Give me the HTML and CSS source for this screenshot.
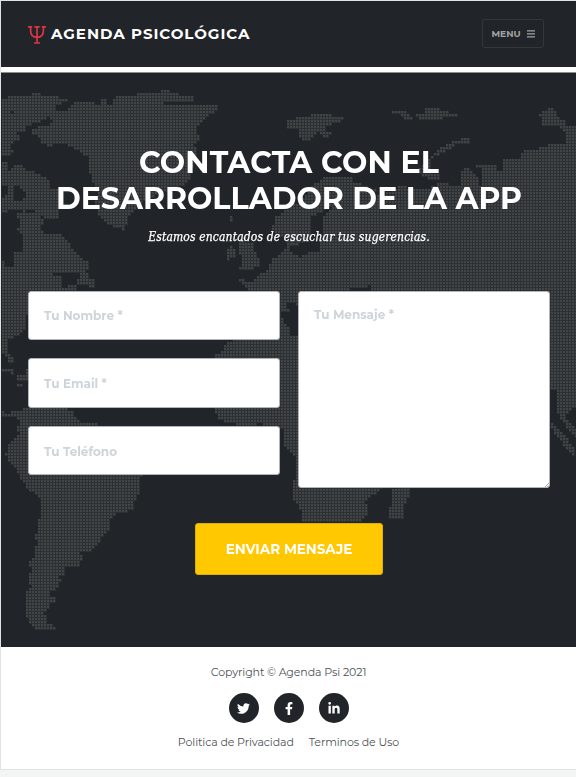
FILE: index.html
```html
<!DOCTYPE html>
<html lang="es">
<head>
<meta charset="utf-8">
<title>Agenda Psicológica</title>
<link rel="stylesheet" href="styles.css">
</head>
<body>
<div class="page">
<header class="nav">
  <a class="brand"><svg class="psi" viewBox="0 0 18 18"><path d="M0 .8h4.200M13.800.8H18M2.600.8v3.800c0 5 2 6.800 6.400 6.800s6.400-1.800 6.400-6.800V.8M9 0v17M6.300.8h5.400M6 17h6"/></svg><span class="brand-name">AGENDA PSICOLÓGICA</span></a>
  <button class="menu"><span>MENU</span><svg width="8" height="8" viewBox="0 0 8 8"><path d="M0 .2h8v1.300H0zM0 3.200h8v1.300H0zM0 6.200h8v1.300H0z"/></svg></button>
</header>
<section class="contact">
  <canvas class="map" id="map" width="575" height="574"></canvas>
  <div class="content">
    <h1><span class="t1">CONTACTA CON EL</span><br><span class="t2">DESARROLLADOR DE LA APP</span></h1>
    <p class="sub">Estamos encantados de escuchar tus sugerencias.</p>
    <form>
      <div class="fields">
        <div class="col">
          <input placeholder="Tu Nombre *"><input placeholder="Tu Email *"><input placeholder="Tu Teléfono">
        </div>
        <div class="message"><textarea placeholder="Tu Mensaje *"></textarea><svg class="grip" width="4" height="4" viewBox="0 0 4 4"><path d="M0 4L4 0M2.500 4L4 2.500"/></svg></div>
      </div>
      <button class="send" type="button"><span>ENVIAR MENSAJE</span></button>
    </form>
  </div>
</section>
<footer>
  <p class="copy">Copyright © Agenda Psi 2021</p>
  <div class="social">
    <a><svg width="13" height="13" viewBox="0 0 512 512"><path d="M459.370 151.716c.325 4.548.325 9.097.325 13.645 0 138.720-105.583 298.558-298.558 298.558-59.452 0-114.680-17.219-161.137-47.106 8.447.974 16.568 1.299 25.340 1.299 49.055 0 94.213-16.568 130.274-44.832-46.132-.975-84.792-31.188-98.112-72.772 6.498.974 12.995 1.624 19.818 1.624 9.421 0 18.843-1.300 27.614-3.573-48.081-9.747-84.143-51.980-84.143-102.985v-1.299c13.969 7.797 30.214 12.670 47.431 13.319-28.264-18.843-46.781-51.005-46.781-87.391 0-19.492 5.197-37.360 14.294-52.954 51.655 63.675 129.300 105.258 216.365 109.807-1.624-7.797-2.599-15.918-2.599-24.040 0-57.828 46.782-104.934 104.934-104.934 30.213 0 57.502 12.670 76.670 33.137 23.715-4.548 46.456-13.320 66.599-25.340-7.798 24.366-24.366 44.833-46.132 57.827 21.117-2.273 41.584-8.122 60.426-16.243-14.292 20.791-32.161 39.308-52.628 54.253z"/></svg></a>
    <a><svg width="8" height="13" viewBox="0 0 320 512"><path d="M279.140 288l14.220-92.660h-88.910v-60.130c0-25.350 12.420-50.060 52.240-50.060h40.420V6.260S260.430 0 225.360 0c-73.220 0-121.080 44.380-121.080 124.720v70.620H22.890V288h81.390v224h100.170V288z"/></svg></a>
    <a><svg width="12" height="13" viewBox="0 0 448 512"><path d="M100.280 448H7.400V148.900h92.880zM53.790 108.100C24.090 108.100 0 83.500 0 53.800a53.790 53.790 0 0 1 107.580 0c0 29.700-24.100 54.300-53.790 54.300zM447.900 448h-92.680V302.400c0-34.700-.7-79.200-48.290-79.200-48.290 0-55.690 37.700-55.690 76.700V448h-92.780V148.900h89.080v40.800h1.300c12.400-23.500 42.690-48.300 87.880-48.300 94 0 111.280 61.900 111.280 142.300V448z"/></svg></a>
  </div>
  <div class="links"><a class="l1">Politica de Privacidad</a><a class="l2">Terminos de Uso</a></div>
</footer>
</div>
<script src="map.js"></script>
</body>
</html>
```
FILE: map.js
```js
// Land outlines at three units per pixel: [x offset, y offset, points]
const land = [
  [0,210,"5,87 24,87 24,78 97,78 97,69 124,69 124,78 178,78 178,87 205,87 205,96 187,96 187,105 168,105 160,114 169,123 150,140 125,150 105,160 70,165 78,180 50,190 60,210 40,215 30,232 40,245 20,260 0,260 0,87"],
  [0,210,"197,123 200,114 217,105 217,96 280,96 280,108 298,105 298,87 318,87 318,105 335,105 335,96 345,78 410,78 410,69 482,69 482,60 508,60 508,69 535,69 535,78 580,78 580,96 490,96 490,105 655,105 655,123 630,132 610,150 590,165 590,190 600,205 580,222 590,240 575,300 570,330 540,350 480,370 420,400 380,440 380,465 370,478 350,475 320,460 300,440 285,400 290,370 275,330 270,310 262,290 262,260 240,248 225,235 200,225 160,220 150,232 118,215 120,200 98,195 98,180 115,168 160,160 145,140 160,125"],
  [0,210,"0,270 25,280 25,300 55,280 70,285 75,300 100,300 120,315 150,330 150,350 178,360 178,400 180,440 140,450 130,440 110,440 105,425 85,415 60,420 0,425 0,385 25,375 20,345 0,345"],
  [0,210,"50,430 70,430 70,420 95,430 120,440 130,455 120,475 135,495 165,495 175,485 200,510 215,535 240,560 262,575 262,600 240,610 205,605 160,605 160,617 180,620 180,665 100,680 100,735 75,735 75,780 50,795 25,810 22,845 40,860 40,875 28,880 15,855 0,845 0,545 20,595 45,580 35,550 65,540 70,500 50,480 60,460"],
  [0,210,"240,610 265,605 270,625 285,630 288,650 270,655 265,640 228,640 228,625 240,622"],
  [0,210,"205,642 225,642 225,660 180,660 180,652 205,652"],
  [0,840,"0,262 30,262 30,270 42,270 42,284 18,275 0,272"],
  [0,840,"50,282 75,282 75,262 90,262 90,300 50,298"],
  [0,840,"50,308 70,308 70,318 50,318"],
  [0,840,"0,390 20,400 40,390 60,395 85,378 190,385 215,390 230,415 250,428 285,430 400,500 426,585 415,600 415,645 400,670 395,690 345,700 325,720 325,750 300,780 270,818 255,818 235,810 250,830 235,855 197,857 197,880 172,888 187,897 170,925 152,930 152,950 170,950 170,965 150,965 150,980 133,998 142,1010 142,1030 170,1040 170,1050 105,1050 88,1030 78,1010 78,930 97,920 88,910 88,880 97,860 88,855 88,840 106,825 106,802 115,785 106,780 106,758 115,755 115,720 125,718 125,658 105,640 80,627 50,570 30,545 15,525 25,490 60,460 50,445 62,430 50,410 0,408"],
  [0,210,"690,528 710,540 705,565 675,570 680,545"],
  [0,210,"735,500 735,515 760,520 765,545 780,570 775,590 745,600 715,600 725,580 720,550 715,530 720,510"],
  [0,210,"693,434 700,434 700,452 693,452"],
  [0,210,"820,500 818,465 828,440 850,430 864,410 900,395 935,345 975,320 1055,318 1060,335 1090,345 1130,360 1110,385 1150,370 1210,345 1225,360 1290,355 1310,340 1340,335 1360,350 1378,350 1378,310 1400,290 1420,280 1440,285 1465,280 1500,290 1505,265 1525,270 1565,270 1565,245 1610,235 1660,218 1690,222 1700,200 1683,175 1728,190 1728,1008 1690,1035 1673,1030 1671,955 1650,955 1420,1200 1150,1250 1149,1250 1139,1265 1109,1280 1094,1295 1102,1315 1102,1335 1074,1358 904,1358 904,1330 894,1305 876,1280 876,1250 890,1200 885,1160 855,1130 850,1075 785,1065 780,1055 760,1067 680,1060 650,1040 640,1015 645,850 665,845 670,825 700,810 750,660 715,630 715,620 750,640 770,620 800,600 815,570 845,545 864,520 864,500"],
  [864,210,"395,290 430,260 440,245 470,225 515,207 542,207 542,218 500,225 480,240 445,255 425,275 430,310 450,315 455,330 420,325 395,310"],
  [864,210,"0,150 30,142 65,140 70,132 128,132 130,142 165,142 165,152 130,160 100,175 75,205 50,212 30,200 30,180 0,175"],
  [864,210,"95,180 115,180 128,190 115,203 95,195"],
  [864,210,"312,122 357,122 357,131 366,131 378,149 348,149 330,132 312,132"],
  [864,210,"387,131 413,125 413,113 450,113 477,125 505,131 505,140 475,140 450,150 413,150 387,141"],
  [864,210,"755,130 765,122 790,115 805,125 805,140 830,150 835,165 864,165 864,200 830,190 815,165 790,165 760,165"],
  [828,840,"822,430 830,430 895,500 895,528 865,500 830,450"],
  [828,840,"845,400 860,400 900,445 900,475 870,440"],
  [864,1380,"330,80 368,80 368,105 350,130 350,165 340,178 305,178 305,140 315,130 315,90"]
];
const water = [
  [0,210,"42,350 60,340 60,358 75,362 75,380 62,390 42,392"],
  [0,210,"30,123 42,123 42,132 30,132"],
  [864,210,"70,440 100,425 120,400 130,410 100,440 100,500 95,545 60,548 40,560 10,545 5,530 40,520 70,490"],
  [0,840,"860,65 895,75 895,165 870,165 870,140 850,125 840,100 865,95"],
  [828,840,"220,22 270,22 285,15 285,30 220,30"],
  [864,210,"500,260 570,290 580,300 580,350 568,350 568,320"],
  [864,210,"625,270 645,262 645,300 625,305"]
];
const ctx = document.getElementById("map").getContext("2d");
function outline([dx, dy, points]) {
  const p = new Path2D();
  points.split(" ").forEach((s, i) => {
    const [x, y] = s.split(",").map(Number);
    p[i ? "lineTo" : "moveTo"]((x + dx) / 3 - 1, (y + dy) / 3 - 73);
  });
  p.closePath();
  return p;
}
const lands = land.map(outline), waters = water.map(outline);
for (let y = -1; y < 574; y += 3) {
  for (let x = 1; x < 575; x += 3) {
    const inside = p => ctx.isPointInPath(p, x + 1, y + 1);
    if (!lands.some(inside) || waters.some(inside)) continue;
    ctx.fillStyle = "#2c3033";
    ctx.fillRect(x, y, 3, 3);
    ctx.fillStyle = "#414548";
    ctx.fillRect(x, y, 2, 2);
  }
}
```
FILE: styles.css
```css
* { box-sizing: border-box; }
body { margin: 0; background: #f3f4f4; font-family: Montserrat, Inter, sans-serif; }
.page { height: 770px; border: solid #dfe3e3; border-width: 1px 0 1px 1px; background: #fff; }
.nav { height: 66px; background: #212529; display: flex; justify-content: space-between; align-items: center; padding: 0 32px 1px 27px; }
.brand { display: flex; align-items: center; gap: 5px; color: #fff; }
.psi { width: 18px; height: 18px; fill: none; stroke: #dc3545; stroke-width: 1.700; margin-top: 2px; }
.brand-name { font-size: 15px; font-weight: 700; letter-spacing: .98px; white-space: nowrap; }
.menu { width: 62px; height: 29px; padding: 0; display: flex; align-items: center; justify-content: center; gap: 6px; background: none; border: 1px solid #34383b; border-radius: 3px; color: #a1a3a5; font: 700 9px Montserrat, Inter, sans-serif; }
.menu svg { fill: #a1a3a5; }
.contact { position: relative; margin-top: 5px; height: 575px; background: #212529; border-top: 1px solid #8b8e91; }
.map { position: absolute; left: 0; top: 0; }
.content { position: relative; padding: 72px 26px 0 27px; text-align: center; color: #fff; }
h1 { margin: 0; font-size: 30px; line-height: 36px; font-weight: 700; white-space: nowrap; }
.t1 { letter-spacing: .15px; }
.sub { margin: 12px 0 0; height: 16px; font: italic 12px/16px "DejaVu Serif", serif; font-stretch: condensed; letter-spacing: .14px; -webkit-text-stroke: .25px #fff; white-space: nowrap; }
form { margin-top: 45.600px; }
.fields { display: grid; grid-template-columns: 1fr 1fr; gap: 18px; }
.col { display: flex; flex-direction: column; gap: 18px; }
input, textarea { display: block; width: 100%; margin: 0; padding: 14px 15px; background: #fff; border: 1px solid #aeb4ba; border-radius: 3px; font: 700 12px/18px Montserrat, Inter, sans-serif; }
input { height: 49.500px; }
input + input { padding-top: 15px; padding-bottom: 13px; }
textarea { height: 197px; resize: none; }
.message { position: relative; }
.grip { position: absolute; right: 1px; bottom: 1px; fill: none; stroke: #777; stroke-width: .7; }
::placeholder { color: #ced4da; opacity: 1; }
.send { display: block; margin: 35px auto 0; width: 188px; height: 52px; padding: 0; background: #ffc800; border: 1px solid #dbae0a; border-radius: 3px; color: #fff; font: 700 13.500px Montserrat, Inter, sans-serif; }
footer { height: 122px; padding-top: 17px; text-align: center; font-size: 11px; line-height: 16px; color: #4e5256; letter-spacing: -.1px; }
.copy { margin: 0; }
.social { display: flex; justify-content: center; gap: 15px; margin: 13px 0 11px; }
.social a { width: 30px; height: 30px; border-radius: 50%; background: #212529; display: flex; align-items: center; justify-content: center; }
.social svg { fill: #fff; }
.links { display: flex; justify-content: center; gap: 15px; }
```
